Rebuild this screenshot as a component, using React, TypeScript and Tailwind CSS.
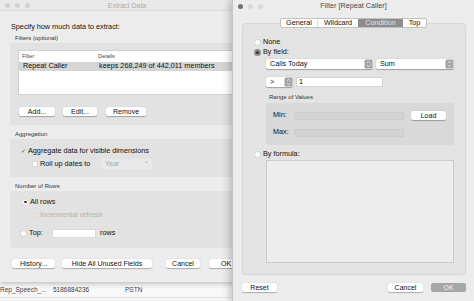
import React from "react";

const F = "font-['Liberation_Sans',Arial,sans-serif]";

function Stepper({ w = 9 }: { w?: number }) {
  return (
    <svg width={w} height="10" viewBox="0 0 9 10" className="shrink-0">
      <rect x="0.5" y="0.5" width="8" height="9" rx="1.5" fill="#a2a2a2" />
      <path d="M2.7 4 L4.5 2.3 L6.3 4" stroke="#ededed" strokeWidth="0.9" fill="none" />
      <path d="M2.7 6 L4.5 7.7 L6.3 6" stroke="#ededed" strokeWidth="0.9" fill="none" />
    </svg>
  );
}

function MacBtn({ label, w, primary }: { label: string; w: string; primary?: boolean }) {
  return (
    <div
      className={`${w} h-[9px] rounded-[2px] flex items-center justify-center text-[7px] leading-none shrink-0 ${
        primary ? "bg-[#a6a6a6] text-[#f4f4f4]" : "bg-white text-[#111] shadow-[0_0.5px_1px_rgba(0,0,0,0.28)]"
      }`}
    >
      {label}
    </div>
  );
}

function Radio({ state }: { state: "off" | "on" | "onLight" }) {
  if (state === "on")
    return (
      <div className="w-[7px] h-[7px] rounded-full bg-[#8d8d8d] flex items-center justify-center shrink-0">
        <div className="w-[3px] h-[3px] rounded-full bg-[#3a3a3a]" />
      </div>
    );
  if (state === "onLight")
    return (
      <div className="w-[7px] h-[7px] rounded-full bg-white border border-[#dedede] flex items-center justify-center shrink-0">
        <div className="w-[2.5px] h-[2.5px] rounded-full bg-[#333]" />
      </div>
    );
  return <div className="w-[7px] h-[7px] rounded-full bg-white border border-[#cfcfcf] shrink-0" />;
}

function LeftWindow() {
  return (
    <div className="absolute left-0 top-0 w-[254px] h-[282px] bg-[#ececec] flex flex-col text-[#111] shadow-[0_2px_5px_rgba(0,0,0,0.22)]">
      <div className="h-[11px] grid grid-cols-[1fr_auto_1fr] items-center bg-[#e9e9e9] border-b border-[#dcdcdc]">
        <div className="flex items-center gap-[5px] pl-[5px]">
          <div className="w-[5px] h-[5px] rounded-full bg-[#d3d3d3]" />
          <div className="w-[5px] h-[5px] rounded-full bg-[#d3d3d3]" />
          <div className="w-[5px] h-[5px] rounded-full bg-[#d3d3d3]" />
        </div>
        <div className="text-[7px] leading-none text-[#ababab]">Extract Data</div>
        <div />
      </div>
      <div className="flex flex-col pl-[10px]">
        <div className="mt-[11px] h-[9px] leading-[9px] pl-[1px] text-[7.25px]">Specify how much data to extract:</div>
        <div className="mt-[2px] h-[10px] leading-[10px] pl-[5px] text-[6px] text-[#333]">Filters (optional)</div>
        <div className="bg-[#e2e2e2] rounded-l-[3px] pt-[7px] pl-[8px] pb-[9px] flex flex-col">
          <div className="h-[45px] bg-white border-l border-y border-[#d2d2d2] flex flex-col">
            <div className="h-[10px] flex items-center text-[5.5px] text-[#444]">
              <div className="w-[79px] pl-[3px]">Filter</div>
              <div>Details</div>
            </div>
            <div className="h-[9px] mt-[1px] flex items-center bg-[#d5d5d5] text-[7.25px]">
              <div className="w-[80px] pl-[4px]">Repeat Caller</div>
              <div>keeps 268,249 of 442,011 members</div>
            </div>
          </div>
          <div className="mt-[12px] flex items-center pl-[1px]">
            <MacBtn label="Add..." w="w-[36px]" />
            <div className="w-[8px]" />
            <MacBtn label="Edit..." w="w-[34px]" />
            <div className="w-[9px]" />
            <MacBtn label="Remove" w="w-[40px]" />
          </div>
        </div>
        <div className="mt-[4px] h-[10px] leading-[10px] pl-[5px] text-[6px] text-[#333]">Aggregation</div>
        <div className="bg-[#e2e2e2] rounded-l-[3px] pt-[7px] pb-[8px] flex flex-col">
          <div className="h-[10px] flex items-center pl-[11px] text-[7.25px]">
            <span className="w-[7px] text-[6px] text-[#555]">✓</span>
            <span>Aggregate data for visible dimensions</span>
          </div>
          <div className="mt-[3px] h-[10px] flex items-center pl-[22px] text-[7.25px]">
            <div className="w-[6px] h-[6px] bg-white border border-[#d4d4d4] rounded-[1px] shrink-0" />
            <div className="w-[63px] pl-[2px]">Roll up dates to</div>
            <div className="w-[51px] h-[10px] bg-[#e9e9e9] rounded-[2px] flex items-center justify-between pl-[4px] pr-[3px] text-[#a8a8a8] text-[7px]">
              <span>Year</span>
              <span className="text-[6px]">⌃</span>
            </div>
          </div>
        </div>
        <div className="mt-[4px] h-[10px] leading-[10px] pl-[5px] text-[6px] text-[#333]">Number of Rows</div>
        <div className="bg-[#e2e2e2] rounded-l-[3px] pt-[6px] pb-[10px] flex flex-col text-[7.25px]">
          <div className="h-[10px] flex items-center pl-[12px] gap-[1px]">
            <Radio state="onLight" />
            <span>All rows</span>
          </div>
          <div className="mt-[3px] h-[10px] flex items-center pl-[22px] gap-[3px]">
            <div className="w-[5px] h-[5px] bg-[#e6e6e6] border border-[#dadada] shrink-0" />
            <span className="text-[#b3b3b3]">Incremental refresh</span>
          </div>
          <div className="mt-[8px] h-[10px] flex items-center pl-[10px]">
            <Radio state="off" />
            <span className="w-[25px] pl-[2px]">Top:</span>
            <div className="w-[44px] h-[9px] bg-white border border-[#dadada]" />
            <span className="pl-[4px]">rows</span>
          </div>
        </div>
        <div className="mt-[11px] flex items-center pl-[2px]">
          <MacBtn label="History..." w="w-[43px]" />
          <div className="w-[7px]" />
          <MacBtn label="Hide All Unused Fields" w="w-[90px]" />
          <div className="w-[14px]" />
          <MacBtn label="Cancel" w="w-[34px]" />
          <div className="w-[9px]" />
          <MacBtn label="OK" w="w-[34px]" />
        </div>
      </div>
    </div>
  );
}

function Drop({ label, w }: { label: string; w: string }) {
  return (
    <div className={`${w} h-[10px] bg-white rounded-[2px] shadow-[0_0.5px_1px_rgba(0,0,0,0.3)] flex items-center justify-between pl-[4px] text-[7.25px]`}>
      <span>{label}</span>
      <Stepper />
    </div>
  );
}

function RightWindow() {
  return (
    <div className="absolute left-[232px] top-0 w-[242px] h-[301px] bg-[#ececec] border-l border-[#c4c4c4] flex flex-col text-[#111] shadow-[-3px_0_7px_rgba(0,0,0,0.2)]">
      <div className="h-[12px] grid grid-cols-[1fr_auto_1fr] items-center">
        <div className="flex items-center gap-[5px] pl-[5px]">
          <div className="w-[5px] h-[5px] rounded-full bg-[#727272]" />
          <div className="w-[5px] h-[5px] rounded-full bg-[#d8d8d8]" />
          <div className="w-[5px] h-[5px] rounded-full bg-[#d8d8d8]" />
        </div>
        <div className="text-[7.25px] leading-none text-[#4a4a4a]">Filter [Repeat Caller]</div>
        <div />
      </div>
      <div className="mt-[6px] h-[10px] flex justify-center relative z-10">
        <div className="flex h-[10px] bg-white border border-[#c2c2c2] rounded-[2px] text-[7.25px] overflow-hidden">
          <div className="w-[37px] flex items-center justify-center border-r border-[#dcdcdc]">General</div>
          <div className="w-[40px] flex items-center justify-center">Wildcard</div>
          <div className="w-[45px] flex items-center justify-center bg-[#8c8c8c] text-[#e4e4e4]">Condition</div>
          <div className="w-[23px] flex items-center justify-center">Top</div>
        </div>
      </div>
      <div className="-mt-[5px] ml-[9px] mr-[8px] h-[252px] bg-[#e3e3e3] border border-[#d8d8d8] rounded-[3px] pt-[13px] flex flex-col text-[7.25px]">
        <div className="h-[10px] flex items-center pl-[11px] gap-[2px]">
          <Radio state="off" />
          <span>None</span>
        </div>
        <div className="h-[10px] flex items-center pl-[11px] gap-[2px]">
          <Radio state="on" />
          <span>By field:</span>
        </div>
        <div className="mt-[2px] h-[10px] flex items-center pl-[23px] gap-[3px]">
          <Drop label="Calls Today" w="w-[107px]" />
          <Drop label="Sum" w="w-[78px]" />
        </div>
        <div className="mt-[8px] h-[10px] flex items-center pl-[23px] gap-[3px]">
          <Drop label=">" w="w-[27px]" />
          <div className="w-[87px] h-[10px] bg-white border border-[#d4d4d4] flex items-center pl-[2px]">1</div>
        </div>
        <div className="mt-[6px] h-[9px] leading-[9px] pl-[26px] text-[6px] text-[#333]">Range of Values</div>
        <div className="mt-[1px] ml-[23px] w-[188px] h-[42px] bg-[#d9d9d9] rounded-[3px] pt-[8px] flex flex-col">
          <div className="h-[9px] flex items-center pl-[7px]">
            <span className="w-[21px]">Min:</span>
            <div className="w-[110px] h-[8px] bg-[#d3d3d3] border border-[#cdcdcd]" />
            <div className="w-[7px]" />
            <MacBtn label="Load" w="w-[35px]" />
          </div>
          <div className="mt-[8px] h-[9px] flex items-center pl-[7px]">
            <span className="w-[21px]">Max:</span>
            <div className="w-[110px] h-[8px] bg-[#d3d3d3] border border-[#cdcdcd]" />
          </div>
        </div>
        <div className="mt-[4px] h-[10px] flex items-center pl-[11px] gap-[2px]">
          <Radio state="off" />
          <span>By formula:</span>
        </div>
        <div className="mt-[1px] ml-[23px] w-[188px] h-[103px] bg-[#ededed] border border-[#cbcbcb]" />
      </div>
      <div className="mt-[8px] flex items-center pl-[9px]">
        <MacBtn label="Reset" w="w-[35px]" />
        <div className="flex-1" />
        <MacBtn label="Cancel" w="w-[35px]" />
        <div className="w-[8px]" />
        <MacBtn label="OK" w="w-[35px]" primary />
        <div className="w-[8px]" />
      </div>
    </div>
  );
}

export default function App() {
  return (
    <div className={`${F} relative w-[474px] h-[301px] overflow-hidden bg-[#f6f6f6] flex flex-col`}>
      <div className="h-[283px] shrink-0" />
      <div className="h-[15px] flex items-center text-[6.5px] text-[#444] bg-[#f8f8f8] border-b border-[#e2e2e2]">
        <span className="w-[53px]">Rep_Speech_...</span>
        <span className="w-[72px]">5186884236</span>
        <span>PSTN</span>
      </div>
      <LeftWindow />
      <RightWindow />
    </div>
  );
}
